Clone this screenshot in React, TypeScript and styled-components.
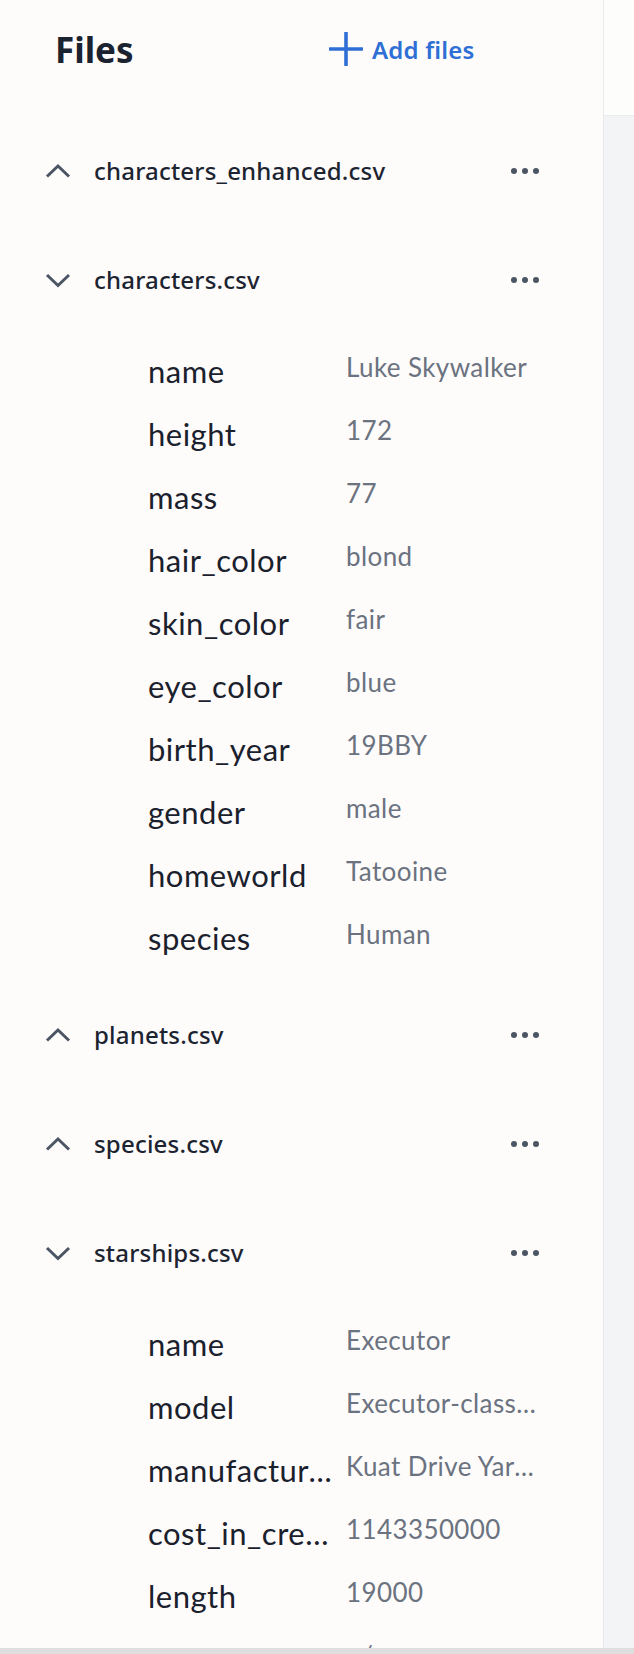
import React from "react";
import styled, { createGlobalStyle } from "styled-components";

const GlobalStyle = createGlobalStyle`
  html, body { margin: 0; padding: 0; background: #fdfcfb; }
  #root { height: 100vh; }
  * { box-sizing: border-box; }
`;

const Page = styled.div`
  height: 100vh;
  display: flex;
  flex-direction: column;
  overflow: hidden;
`;

const Main = styled.div`
  flex: 1;
  min-height: 0;
  display: flex;
`;

const Sidebar = styled.aside`
  width: 604px;
  flex: none;
  background: #fdfcfb;
  border-right: 1px solid #e8e8ee;
  overflow: hidden;
`;

const RightPane = styled.div`
  flex: 1;
  display: flex;
  flex-direction: column;
`;

const RightTop = styled.div`
  height: 116px;
  background: #fdfdfc;
  border-bottom: 1px solid #ececf0;
`;

const RightBody = styled.div`
  flex: 1;
  background: #f3f4f6;
`;

const ScrollTrack = styled.div`
  height: 6px;
  flex: none;
  background: #dedede;
`;

const TopBar = styled.header`
  height: 116px;
  display: flex;
  align-items: flex-start;
  padding: 24px 0 0 55px;
`;

const TopRow = styled.div`
  height: 50px;
  display: flex;
  align-items: center;
  width: 100%;
`;

const Title = styled.h1`
  margin: 0;
  width: 274px;
  font-family: "Noto Sans", "Open Sans", sans-serif;
  font-size: 35px;
  font-weight: 700;
  color: #1b2230;
`;

const AddButton = styled.button`
  display: flex;
  align-items: center;
  gap: 9px;
  border: none;
  background: none;
  padding: 0;
  cursor: pointer;
  font-family: "Noto Sans", "Open Sans", sans-serif;
  font-size: 24px;
  font-weight: 600;
  letter-spacing: 0.2px;
  color: #2f6fd5;
`;

const FileBlock = styled.section``;

const FileHeader = styled.div`
  height: 109px;
  display: flex;
  align-items: center;
  padding-left: 45px;
  padding-right: 64px;
`;

const ChevronBox = styled.span`
  width: 26px;
  height: 16px;
  display: flex;
  flex: none;
`;

const FileName = styled.span`
  flex: 1;
  margin-left: 23px;
  font-family: "Noto Sans", "Open Sans", sans-serif;
  font-size: 24px;
  font-weight: 500;
  letter-spacing: 0.2px;
  color: #1d2431;
`;

const DotsBox = styled.span`
  display: flex;
  width: 28px;
  height: 6px;
`;

const FieldList = styled.div`
  padding: 8px 0 8px 148px;
`;

const FieldRow = styled.div`
  height: 63px;
  display: flex;
  align-items: flex-start;
`;

const FieldLabel = styled.span`
  width: 188px;
  flex: none;
  padding-top: 11px;
  font-family: "Lato", sans-serif;
  font-size: 31px;
  letter-spacing: 0.5px;
  line-height: 1.2;
  color: #1a202c;
  white-space: nowrap;
  overflow: hidden;
  text-overflow: ellipsis;
`;

const FieldValue = styled.span`
  width: 190px;
  flex: none;
  margin-left: 10px;
  padding-top: 10px;
  font-family: "Lato", sans-serif;
  font-size: 26px;
  letter-spacing: 0.4px;
  line-height: 1.2;
  color: #6b7280;
  white-space: nowrap;
  overflow: hidden;
  text-overflow: ellipsis;
`;

const Chevron = ({ open }: { open: boolean }) => (
  <ChevronBox>
    <svg width="26" height="16" viewBox="0 0 26 16" fill="none">
      <polyline
        points={open ? "2,3 13,13.5 24,3" : "2,13.5 13,3 24,13.5"}
        stroke="#4b5563"
        strokeWidth="3"
        strokeLinejoin="miter"
      />
    </svg>
  </ChevronBox>
);

const Dots = () => (
  <DotsBox>
    <svg width="28" height="6" viewBox="0 0 28 6">
      <circle cx="3" cy="3" r="3" fill="#4b5563" />
      <circle cx="14" cy="3" r="3" fill="#4b5563" />
      <circle cx="25" cy="3" r="3" fill="#4b5563" />
    </svg>
  </DotsBox>
);

const Plus = () => (
  <svg width="34" height="34" viewBox="0 0 34 34" fill="none">
    <line x1="17" y1="1" x2="17" y2="33" stroke="#2f6fd5" strokeWidth="3.6" strokeLinecap="round" />
    <line x1="1" y1="17" x2="33" y2="17" stroke="#2f6fd5" strokeWidth="3.6" strokeLinecap="round" />
  </svg>
);

type Field = [string, string];

const files: { name: string; open: boolean; fields?: Field[] }[] = [
  { name: "characters_enhanced.csv", open: false },
  {
    name: "characters.csv",
    open: true,
    fields: [
      ["name", "Luke Skywalker"],
      ["height", "172"],
      ["mass", "77"],
      ["hair_color", "blond"],
      ["skin_color", "fair"],
      ["eye_color", "blue"],
      ["birth_year", "19BBY"],
      ["gender", "male"],
      ["homeworld", "Tatooine"],
      ["species", "Human"],
    ],
  },
  { name: "planets.csv", open: false },
  { name: "species.csv", open: false },
  {
    name: "starships.csv",
    open: true,
    fields: [
      ["name", "Executor"],
      ["model", "Executor-class star dreadnought"],
      ["manufacturer", "Kuat Drive Yards, Fondor Shipyards"],
      ["cost_in_credits", "1143350000"],
      ["length", "19000"],
      ["max_atmosphering_speed", "n/a"],
      ["crew", "279144"],
      ["passengers", "38000"],
    ],
  },
];

export default function App() {
  return (
    <>
      <GlobalStyle />
      <Page>
        <Main>
          <Sidebar>
            <TopBar>
              <TopRow>
                <Title>Files</Title>
                <AddButton>
                  <Plus />
                  Add files
                </AddButton>
              </TopRow>
            </TopBar>
            {files.map((f) => (
              <FileBlock key={f.name}>
                <FileHeader>
                  <Chevron open={f.open} />
                  <FileName>{f.name}</FileName>
                  <Dots />
                </FileHeader>
                {f.open && f.fields && (
                  <FieldList>
                    {f.fields.map(([k, v]) => (
                      <FieldRow key={k}>
                        <FieldLabel>{k}</FieldLabel>
                        <FieldValue>{v}</FieldValue>
                      </FieldRow>
                    ))}
                  </FieldList>
                )}
              </FileBlock>
            ))}
          </Sidebar>
          <RightPane>
            <RightTop />
            <RightBody />
          </RightPane>
        </Main>
        <ScrollTrack />
      </Page>
    </>
  );
}
